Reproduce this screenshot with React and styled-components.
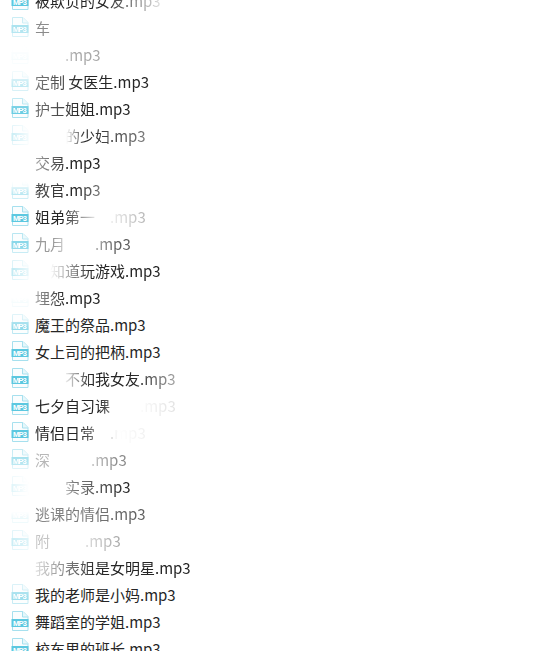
import styled, { createGlobalStyle } from 'styled-components';

const GlobalStyle = createGlobalStyle`
  html, body {
    margin: 0;
    padding: 0;
    background: #ffffff;
    overflow: hidden;
  }
`;

const List = styled.ul`
  list-style: none;
  margin: -13px 0 0;
  padding: 0 0 0 11px;
  height: 664px;
  overflow: hidden;
  font-family: "Noto Sans CJK SC", "Noto Sans", sans-serif;
  font-size: 15px;
  color: #262626;
`;

const Row = styled.li`
  display: flex;
  align-items: center;
  gap: 6px;
  height: 27px;
`;

const IconWrap = styled.span`
  display: block;
  flex: none;
  width: 18px;
  height: 21px;
  margin-top: -1px;
  mask-image: ${(p) => p.$mask || 'none'};
`;

const Name = styled.span`
  display: flex;
  white-space: pre;
  line-height: 27px;
  mask-image: ${(p) => p.$mask || 'none'};
`;

const Blank = styled.span`
  display: block;
  width: ${(p) => p.$w}px;
`;

const Mp3Icon = () => (
  <svg width="18" height="21" viewBox="0 0 18 21">
    <path d="M1.5.5H12L17 5.5V19.5H1.5Z" fill="#fafdfe" stroke="#a6e0ee" />
    <path d="M11.5.5V6H17" fill="#e6f7fb" stroke="#a6e0ee" />
    <rect x="0.5" y="8" width="17" height="8" fill="#5cc8e0" />
    <text x="9" y="14.7" textAnchor="middle" fontFamily="Liberation Sans, sans-serif" fontSize="7.5" fontWeight="700" textLength="14" fill="#ffffff">
      MP3
    </text>
  </svg>
);

const h = (a, b) => `linear-gradient(90deg, ${a}, ${b})`;
const v = (a, b) => `linear-gradient(180deg, ${a}, ${b})`;

// numbers in parts are the spots rubbed out of the picture
const files = [
  { parts: ['被欺负的女友.mp3'], mask: h('#000 55%', '#0002 100%') },
  { parts: ['车', 75, '.mp3'], mask: h('#0008 12%, #0000 22%', '#0000 80%, #0000 100%'), icon: v('#0009', '#0006') },
  { parts: [30, '.mp3'], mask: h('#0000 30%', '#0006 60%'), icon: v('#0000', '#0001') },
  { parts: ['定制 女医生.mp3'], mask: h('#0009', '#000 40%'), icon: v('#0002', '#0007') },
  { parts: ['护士姐姐.mp3'], mask: h('#000a', '#000 50%'), icon: v('#000a', '#000') },
  { parts: [30, '的少妇.mp3'], mask: h('#0000 28%', '#000 45%, #0009 100%'), icon: h('#0005', '#0001') },
  { parts: ['交易.mp3'], mask: h('#0006', '#000 50%'), icon: v('#0000', '#0000') },
  { parts: ['教官.mp3'], mask: h('#000c', '#000 60%, #0009 100%'), icon: v('#0000 10%', '#0009') },
  { parts: ['姐弟第一', 15, '.mp3'], mask: h('#000 25%', '#0000 58%, #0005 100%') },
  { parts: ['九月', 30, '.mp3'], mask: h('#0007 20%', '#0000 40%, #000b 85%'), icon: v('#000c', '#0009') },
  { parts: [15, '知道玩游戏.mp3'], mask: h('#0000 12%', '#000 45%'), icon: h('#0006', '#0002') },
  { parts: ['埋怨.mp3'], mask: h('#0006', '#000 45%'), icon: v('#0000 50%', '#0002') },
  { parts: ['魔王的祭品.mp3'], icon: v('#0005', '#000c') },
  { parts: ['女上司的把柄.mp3'] },
  { parts: [30, '不如我女友.mp3'], mask: h('#0000 20%', '#000 40%, #000 70%, #0006 100%'), icon: v('#000', '#000') },
  { parts: ['七夕自习课', 30, '.mp3'], mask: h('#000 45%', '#0000 70%, #0002 100%') },
  { parts: ['情侣日常', 15, '.mp3'], mask: h('#000 40%', '#0000 75%, #0001 100%') },
  { parts: ['深', 41, '.mp3'], mask: h('#0005 15%', '#0000 35%, #0008 90%'), icon: v('#000a', '#0005') },
  { parts: [30, '实录.mp3'], mask: h('#0000 25%', '#0009 40%, #000 100%'), icon: h('#0003', '#0000') },
  { parts: ['逃课的情侣.mp3'], mask: h('#0008', '#000b 100%'), icon: v('#0000 40%', '#0003') },
  { parts: ['附', 35, '.mp3'], mask: h('#0004 15%', '#0000 30%, #0006 100%'), icon: h('#0005', '#0003') },
  { parts: ['我的表姐是女明星.mp3'], mask: h('#0002', '#000 40%'), icon: v('#0000', '#0000') },
  { parts: ['我的老师是小妈.mp3'], icon: v('#0006', '#000a') },
  { parts: ['舞蹈室的学姐.mp3'] },
  { parts: ['校车里的班长.mp3'] },
];

export default function App() {
  return (
    <>
      <GlobalStyle />
      <List>
        {files.map((file, i) => (
          <Row key={i}>
            <IconWrap $mask={file.icon}>
              <Mp3Icon />
            </IconWrap>
            <Name $mask={file.mask}>
              {file.parts.map((part, j) =>
                typeof part === 'number' ? <Blank key={j} $w={part} /> : <span key={j}>{part}</span>
              )}
            </Name>
          </Row>
        ))}
      </List>
    </>
  );
}
